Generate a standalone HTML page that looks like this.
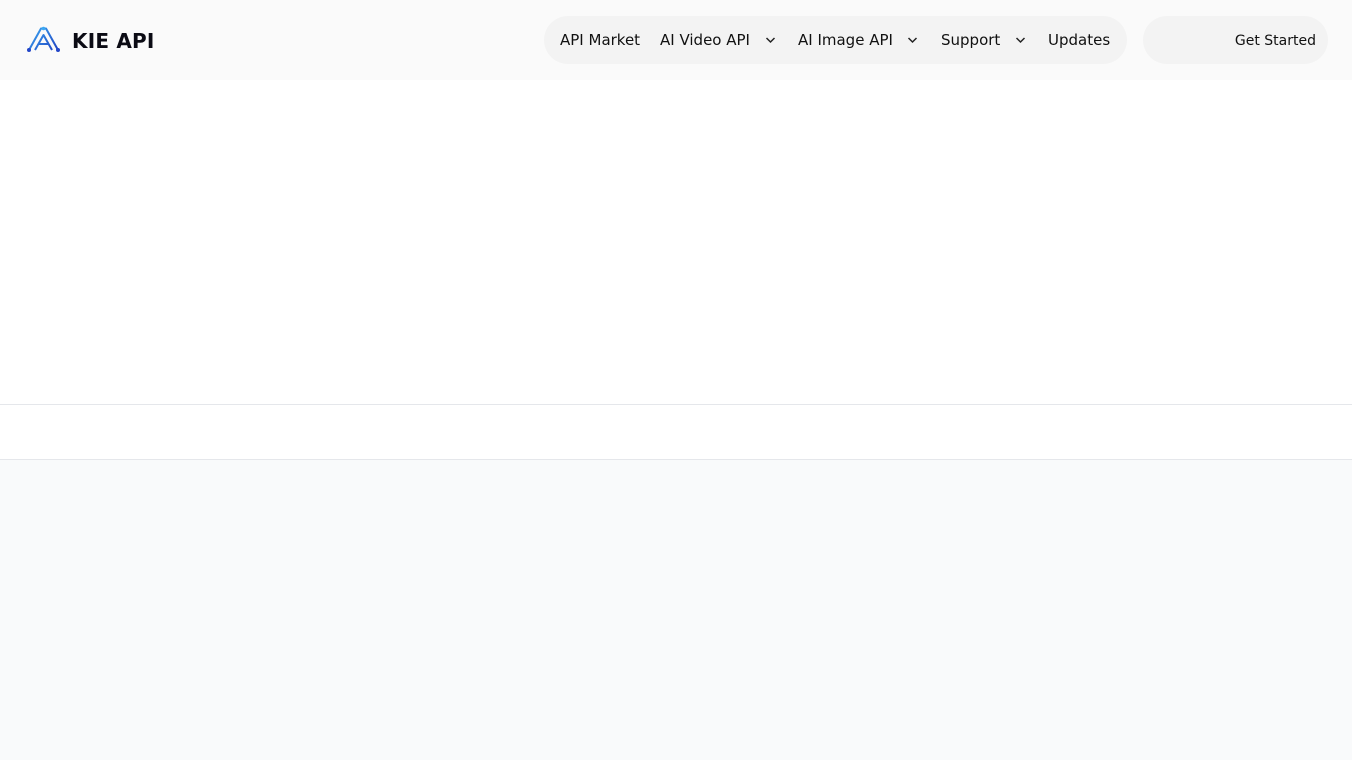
<!DOCTYPE html>
<html><head><meta charset="utf-8"><style>
*{margin:0;padding:0;box-sizing:border-box}
body{width:1352px;height:760px;background:#f9fafb;font-family:"DejaVu Sans","Liberation Sans",sans-serif;color:#111;overflow:hidden;position:relative}
header{position:absolute;left:0;top:0;width:1352px;height:80px;background:#fafafa}
.logo{position:absolute;left:26px;top:26px;display:flex;align-items:center}
.logo span{font-weight:bold;font-size:20px;margin-left:11px;color:#0b0b14;letter-spacing:0.2px;position:relative;top:1px}
.nav{position:absolute;left:544px;top:16px;width:583px;height:48px;background:#f3f3f3;border-radius:24px;font-size:15px}
.nav div{position:absolute;top:15px;white-space:nowrap;color:#111}
.chev{position:absolute;top:20px}
.btn{position:absolute;left:1143px;top:16px;width:185px;height:48px;background:#f3f3f3;border-radius:24px;font-size:14px}
.btn span{position:absolute;right:12px;top:17px}
.white{position:absolute;left:0;top:80px;width:1352px;height:380px;background:#fff}
.line1{position:absolute;left:0;top:404px;width:1352px;height:1px;background:#e5e7eb}
.line2{position:absolute;left:0;top:459px;width:1352px;height:1px;background:#e5e7eb}
</style></head><body>
<header>
<div class="logo">
<svg width="35" height="27" viewBox="0 0 35 27">
<defs><linearGradient id="g" gradientUnits="userSpaceOnUse" x1="5" y1="0" x2="30" y2="27"><stop offset="0" stop-color="#3aa8f2"/><stop offset="1" stop-color="#1f3fc0"/></linearGradient></defs>
<g fill="none" stroke="url(#g)" stroke-width="2" stroke-linejoin="round">
<path d="M3 24 L15 2.5 L20 2.5 L32 24"/>
<path d="M9 24 L17.5 9 L26 24"/>
<path d="M12.5 18 L22.5 18"/>
</g>
<circle cx="3" cy="24" r="2" fill="#2346c8"/><circle cx="32" cy="24" r="2" fill="#2346c8"/><circle cx="17.5" cy="2.5" r="1.8" fill="#3aa8f2"/>
</svg>
<span>KIE API</span>
</div>
<div class="nav">
<div style="left:16px">API Market</div>
<div style="left:116px">AI Video API</div>
<svg class="chev" style="left:221px" width="11" height="8" viewBox="0 0 11 8"><path d="M1.5 2 L5.5 6 L9.5 2" fill="none" stroke="#222" stroke-width="1.5"/></svg>
<div style="left:254px">AI Image API</div>
<svg class="chev" style="left:363px" width="11" height="8" viewBox="0 0 11 8"><path d="M1.5 2 L5.5 6 L9.5 2" fill="none" stroke="#222" stroke-width="1.5"/></svg>
<div style="left:397px">Support</div>
<svg class="chev" style="left:471px" width="11" height="8" viewBox="0 0 11 8"><path d="M1.5 2 L5.5 6 L9.5 2" fill="none" stroke="#222" stroke-width="1.5"/></svg>
<div style="left:504px">Updates</div>
</div>
<div class="btn"><span>Get Started</span></div>
</header>
<div class="white"></div>
<div class="line1"></div>
<div class="line2"></div>
</body></html>
